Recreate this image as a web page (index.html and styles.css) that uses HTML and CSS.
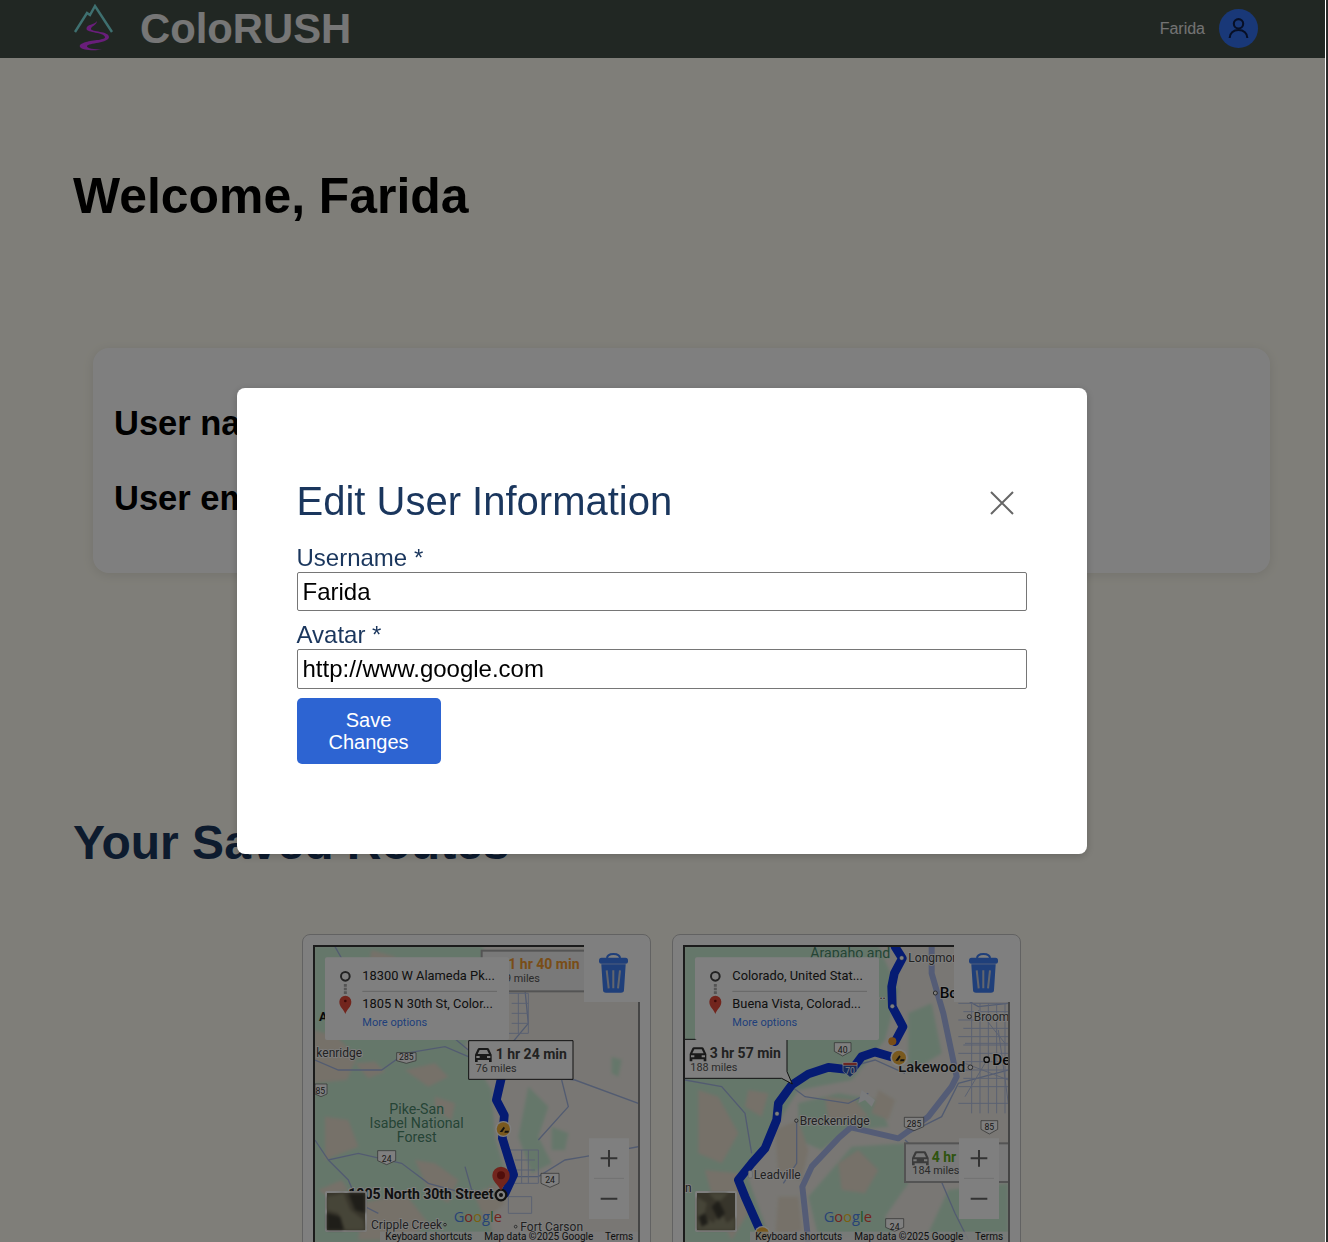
FILE: index.html
```html
<!DOCTYPE html>
<html lang="en">
<head>
<meta charset="utf-8">
<title>ColoRUSH</title>
<link rel="stylesheet" href="styles.css">
</head>
<body>
<div class="page">
  <header class="topbar">
    <div class="brand">
      <svg class="brand-logo" viewBox="0 0 42 48" width="42" height="48" aria-hidden="true">
        <polyline class="logo-peak" points="2,28 14,9 17,11 22,2 39,28"/>
        <path class="logo-river" d="M24 17C22 21 13 20 13.500 25C14 29 31 28 32 33C33 36 20 36 13 38C8 39.500 6 41 7 43C9 46.500 22 47 29 45.500C22 45.500 13 44.500 14 42C15 39 36 39 36 33C36 27 18 28 18 25C18 22 24 21 24 17Z"/>
      </svg>
      <span class="brand-name">ColoRUSH</span>
    </div>
    <div class="user">
      <span class="user-name">Farida</span>
      <span class="user-avatar">
        <svg viewBox="0 0 24 24" width="25" height="25" aria-hidden="true"><circle cx="12" cy="7.500" r="4.500"/><path d="M3.500 21c0-4.500 3.500-7.500 8.500-7.500s8.500 3 8.500 7.500"/></svg>
      </span>
    </div>
  </header>

  <main class="content">
    <h1 class="welcome">Welcome, Farida</h1>
    <section class="profile">
      <p class="profile-line">User name: Farida</p>
      <p class="profile-line">User email: farida@example.com</p>
    </section>
    <h2 class="routes-title">Your Saved Routes</h2>
    <section class="routes">

      <article class="route-card">
        <div class="map-frame">
          <svg class="map" viewBox="60 51 969 885" aria-label="Map">
            <rect class="land" x="0" y="0" width="1100" height="940"/>
            <g class="terrain">
              <path class="green" d="M56 47H560L600 130 520 330 510 350 590 480 600 620 640 760 560 780 600 940H56Z"/>
              <path class="green" d="M700 470l60 60-30 90 40 80-60 30-40-110Z"/>
              <path class="green" d="M770 590l50 20-10 50-40 0Z"/>
              <path class="green" d="M950 380l30 10-10 50-20-10Z"/>
              <path class="tan" d="M56 300l70 20 60 60-30 70-100 10Z"/>
              <path class="tan" d="M180 400l60-5 30 30-50 20Z"/>
              <path class="tan" d="M330 420l90-20 40 40-60 30Z"/>
              <path class="tan" d="M90 560l70 10 30 80-100 40Z"/>
              <path class="tan" d="M360 690l60 10 70 50-30 70-60-40Z"/>
              <path class="tan" d="M200 820l130-30 70 90-60 50H190Z"/>
              <path class="tan" d="M540 800l60-40 30 60-60 50Z"/>
              <path class="tan" d="M230 60l70 20-10 50-70-20Z"/>
              <path class="tan" d="M420 500l60 20-10 50-50-30Z"/>
              <path class="tan" d="M70 780l70-30 20 30-60 20Z"/>
            </g>
            <path class="road" d="M120 50l40 70 70 80 110 60 120 50 60 50"/>
            <path class="road" d="M60 390l70 30 130 0 70-50 120-20 70 30"/>
            <path class="road" d="M690 180l10 100-50 60-30 90"/>
            <path class="road" d="M60 630l40 60 90-20 130 30 80 60 110 30"/>
            <path class="road" d="M100 690l60 60 30 70 60 30"/>
            <path class="road" d="M640 740l90 0 80-50 60-10 160-30"/>
            <path class="road" d="M760 440l80 10 190 70"/>
            <path class="road" d="M800 450l20 80-90 100"/>
            <path class="road" d="M510 710l20 70 60 20"/>
            <path class="road-thin" d="M640 660h90v100h-90ZM660 690h60M660 720h60M680 660v100M700 660v100M640 800h70v50h-70ZM640 190h60v120h-60ZM650 220h50M650 250h50M650 280h50M670 190v120"/>
            <path class="route-line" d="M620 440L604 510 628 556 622 625 656 734 630 790"/>
            <g class="shield"><path d="M305 368h58v24l-29 8-29-8Z"/><text x="334" y="390">285</text></g>
            <g class="shield"><path d="M60 462h36v30l-18 8-18-8Z"/><text x="76" y="492">85</text></g>
            <g class="shield"><path d="M248 662h54v30l-27 12-27-12Z"/><text x="275" y="695">24</text></g>
            <g class="shield"><path d="M738 730h54v30l-27 12-27-12Z"/><text x="765" y="760">24</text></g>
            <text class="m-forest" text-anchor="middle"><tspan x="365" y="551">Pike-San</tspan><tspan x="365" y="593">Isabel National</tspan><tspan x="365" y="635">Forest</tspan></text>
            <text class="m-city" x="64" y="380">kenridge</text>
            <text class="m-city" x="228" y="896">Cripple Creek</text>
            <text class="m-city" x="676" y="902">Fort Carson</text>
            <circle class="m-dot" cx="450" cy="884" r="4"/>
            <circle class="m-dot" cx="662" cy="890" r="4"/>
            <text class="m-city-bold" x="72" y="273">A</text>
            <rect class="m-box" x="560" y="62" width="310" height="122"/>
            <text class="m-time-orange" x="640" y="118">1 hr 40 min</text>
            <text class="m-miles" x="612" y="157">89 miles</text>
            <g class="m-label-box">
              <path d="M521 332H834V448H521Z"/>
            </g>
            <g transform="translate(540 354)"><use href="#car"/></g>
            <text class="m-time" x="602" y="386">1 hr 24 min</text>
            <text class="m-miles" x="542" y="425">76 miles</text>
            <circle class="incident-ring" cx="625" cy="597" r="24"/>
            <circle class="incident" cx="625" cy="597" r="20"/>
            <path class="incident-mark" d="M614 606l12-16 4 4-8 12ZM630 602h12l-2 6h-12Z"/>
            <text class="m-place" x="160" y="806">1805 North 30th Street</text>
            <circle class="target-o" cx="618" cy="795" r="16"/>
            <circle class="target-i" cx="618" cy="795" r="6"/>
            <path class="pin-big" d="M618 782C607 760 592 756 592 736A26 26 0 0 1 644 736C644 756 629 760 618 782Z"/>
            <circle class="pin-big-dot" cx="618" cy="736" r="12"/>
            <text class="m-google" x="476" y="876"><tspan class="g-b">G</tspan><tspan class="g-r">o</tspan><tspan class="g-y">o</tspan><tspan class="g-b">g</tspan><tspan class="g-g">l</tspan><tspan class="g-r">e</tspan></text>
            <g>
              <rect class="thumb-frame" x="90" y="783" width="126" height="123" rx="6"/>
              <rect class="thumb" x="96" y="789" width="114" height="111"/>
              <g class="thumb-detail">
                <path class="thumb-light" d="M96 800l50-10 20 50 40 30 4 30h-60l-20-50-34-10Z"/>
                <path class="thumb-dark" d="M160 790l50 0 0 60-30-10ZM96 850l40 10 10 40H96Z"/>
              </g>
            </g>
            <rect class="attrib" x="255" y="905" width="780" height="32"/>
            <text class="m-attrib" x="271" y="929">Keyboard shortcuts</text>
            <text class="m-attrib" x="568" y="929">Map data ©2025 Google</text>
            <text class="m-attrib" x="930" y="929">Terms</text>
            <g>
              <rect class="zoom-box" x="882" y="625" width="120" height="242"/>
              <path class="zoom-sep" d="M897 745h90"/>
              <path class="zoom-mark" d="M917 685h50M942 660v50M917 806h50"/>
            </g>
            <g>
              <rect class="panel" x="90" y="82" width="552" height="248" rx="6"/>
              <circle class="panel-o" cx="151" cy="139" r="13"/>
              <path class="panel-dots" d="M151 162v30"/>
              <path class="pin" d="M151 252C146 236 133 232 133 215A18 18 0 0 1 169 215C169 232 156 236 151 252Z"/>
              <circle class="pin-dot" cx="151" cy="213" r="4"/>
              <text class="panel-text" x="202" y="149">18300 W Alameda Pk...</text>
              <path class="panel-div" d="M202 184H606"/>
              <text class="panel-text" x="202" y="233">1805 N 30th St, Color...</text>
              <text class="panel-link" x="202" y="287">More options</text>
            </g>
          </svg>
        </div>
        <button class="trash" type="button" aria-label="Delete route">
          <svg viewBox="0 0 30 40" width="30" height="40" aria-hidden="true"><use href="#trash"/></svg>
        </button>
      </article>

      <article class="route-card">
        <div class="map-frame">
          <svg class="map" viewBox="60 51 969 885" aria-label="Map">
            <rect class="land" x="0" y="0" width="1100" height="940"/>
            <g class="terrain">
              <path class="green" d="M56 47H640L700 180 660 330 560 450 400 480 300 640 240 720 320 940H56Z"/>
              <path class="green" d="M400 520l120-30 120 20 30 80-120 10-80 60-70-30Z"/>
              <path class="green" d="M560 650l160-10 10 120-70 100 30 60H460l-30-120Z"/>
              <path class="green" d="M730 250l70-30 30 150-100 60Z"/>
              <path class="green" d="M850 780l180-20v170H780Z"/>
              <path class="tan" d="M100 480l60 20 60 110-50 90-70-30Z"/>
              <path class="tan" d="M120 720l100 10 40 100-60 100-50-100Z"/>
              <path class="tan" d="M330 600l70-30 30 90-20 90-70-20Z"/>
              <path class="tan" d="M340 800l60 0 10 100-80 30Z"/>
              <path class="tan" d="M480 500l90 10 40 50-120 10Z"/>
              <path class="tan" d="M520 700l60-40 60 60-40 70-70-10Z"/>
              <path class="tan" d="M250 100l90 40-20 60-100-20Z"/>
              <path class="tan" d="M640 480l50 30-20 60-50-20Z"/>
              <path class="tan" d="M250 480l60 10-20 70-50-30Z"/>
            </g>
            <path class="road" d="M60 450l110 20 70 80 20 120"/>
            <path class="road" d="M380 470l40 30 130 20 60-30"/>
            <path class="road" d="M395 570l0 130-40 60"/>
            <path class="road" d="M710 620l120-60 50-100 150-40"/>
            <path class="road" d="M720 630l90 80 60 140 40 80"/>
            <path class="road-wide" d="M430 935L412 770 440 710 520 625 558 592 700 625 790 560 860 470 875 440 835 250 800 130 800 47"/>
            <path class="road" d="M520 420l110-30 90 40"/>
            <path class="road" d="M810 190h60l70 40 90-10"/>
            <path class="road-thin" d="M880 220H1034M880 270H1034M880 320H1034M880 370H1034M880 420H1034M880 470H1034M880 520H1034M920 220v330M970 220v330M1020 220v330M900 340h130M900 400l130 50M1000 300l30 220M940 240l80 100M900 500l60-100M895 245H1034M895 295H1034M895 345H1034M895 395H1034M895 445H1034M945 220v330M995 220v330"/>
            <path class="water" d="M590 480l40 30-10 20-20-20-20 10Z"/>
            <path class="route-line" d="M690 50L712 85 688 130 680 170 682 230 714 290 690 335"/>
            <path class="route-line" d="M695 385L630 366 590 380 560 420 490 412 430 432 380 465 340 520 335 570 300 655 260 700 220 750 240 800 282 895"/>
            <circle class="route-node" cx="710" cy="84" r="6"/>
            <circle class="route-node" cx="682" cy="229" r="6"/>
            <circle class="route-node" cx="336" cy="551" r="6"/>
            <rect class="route-node" x="250" y="722" width="12" height="22" rx="4"/>
            <circle class="incident-alt" cx="682" cy="334" r="12"/>
            <g class="shield"><path d="M508 338h50v26l-25 14-25-14Z"/><text x="533" y="368">40</text></g>
            <g class="shield-i"><path d="M534 398h42v26l-21 18-21-18Z"/><path class="shield-i-top" d="M534 398h42v8h-42Z"/><text x="555" y="431">70</text></g>
            <g class="shield"><path d="M718 562h58v28l-29 12-29-12Z"/><text x="747" y="592">285</text></g>
            <g class="shield"><path d="M948 572h50v26l-25 14-25-14Z"/><text x="973" y="600">85</text></g>
            <g class="shield"><path d="M662 866h54v26l-27 12-27-12Z"/><text x="689" y="899">24</text></g>
            <text class="m-forest" x="436" y="84">Arapaho and</text>
            <text class="m-city" x="730" y="96">Longmont</text>
            <text class="m-city-lg" x="824" y="203">Boulder</text>
            <circle class="m-dot" cx="811" cy="189" r="6"/>
            <text class="m-city" x="926" y="272">Broomfield</text>
            <circle class="m-dot" cx="913" cy="260" r="6"/>
            <text class="m-city-lg" x="982" y="404">Denver</text>
            <circle class="m-dot-bold" cx="965" cy="389" r="8"/>
            <text class="m-city-md" x="700" y="426">Lakewood</text>
            <circle class="m-dot" cx="916" cy="412" r="7"/>
            <text class="m-city" x="404" y="584">Breckenridge</text>
            <circle class="m-dot" cx="394" cy="572" r="5"/>
            <text class="m-city" x="266" y="746">Leadville</text>
            <text class="m-city" x="60" y="787">n</text>
            <text class="m-city" x="625" y="206">l...</text>
            <g class="m-label-box">
              <path d="M40 328H366V425L382 462 350 445H40Z"/>
            </g>
            <g transform="translate(74 352)"><use href="#car"/></g>
            <text class="m-time" x="134" y="384">3 hr 57 min</text>
            <text class="m-miles" x="76" y="423">188 miles</text>
            <rect class="m-box" x="720" y="640" width="330" height="116"/>
            <g transform="translate(741 664)"><use href="#car-grey"/></g>
            <text class="m-time-green" x="800" y="695">4 hr 4 min</text>
            <text class="m-miles" x="742" y="733">184 miles</text>
            <circle class="incident-ring" cx="702" cy="383" r="26"/>
            <circle class="incident" cx="702" cy="383" r="21"/>
            <path class="incident-mark" d="M691 392l12-16 4 4-8 12ZM707 388h12l-2 6h-12Z"/>
            <circle class="incident-ring" cx="292" cy="912" r="24"/>
            <circle class="incident" cx="292" cy="912" r="20"/>
            <text class="m-google" x="476" y="876"><tspan class="g-b">G</tspan><tspan class="g-r">o</tspan><tspan class="g-y">o</tspan><tspan class="g-b">g</tspan><tspan class="g-g">l</tspan><tspan class="g-r">e</tspan></text>
            <g>
              <rect class="thumb-frame" x="90" y="783" width="126" height="123" rx="6"/>
              <rect class="thumb" x="96" y="789" width="114" height="111"/>
              <g class="thumb-detail">
                <path class="thumb-light" d="M96 800l30 20-10 40 30 20 20-40 20 40 24-20v40h-114ZM130 789l30 30 30-30Z"/>
                <path class="thumb-dark" d="M140 830l20-20 20 40-20 20ZM100 860l20-10 10 30-20 10Z"/>
              </g>
            </g>
            <rect class="attrib" x="255" y="905" width="780" height="32"/>
            <text class="m-attrib" x="271" y="929">Keyboard shortcuts</text>
            <text class="m-attrib" x="568" y="929">Map data ©2025 Google</text>
            <text class="m-attrib" x="930" y="929">Terms</text>
            <g>
              <rect class="zoom-box" x="882" y="625" width="120" height="242"/>
              <path class="zoom-sep" d="M897 745h90"/>
              <path class="zoom-mark" d="M917 685h50M942 660v50M917 806h50"/>
            </g>
            <g>
              <rect class="panel" x="90" y="82" width="552" height="248" rx="6"/>
              <circle class="panel-o" cx="151" cy="139" r="13"/>
              <path class="panel-dots" d="M151 162v30"/>
              <path class="pin" d="M151 252C146 236 133 232 133 215A18 18 0 0 1 169 215C169 232 156 236 151 252Z"/>
              <circle class="pin-dot" cx="151" cy="213" r="4"/>
              <text class="panel-text" x="202" y="149">Colorado, United Stat...</text>
              <path class="panel-div" d="M202 184H606"/>
              <text class="panel-text" x="202" y="233">Buena Vista, Colorad...</text>
              <text class="panel-link" x="202" y="287">More options</text>
            </g>
          </svg>
        </div>
        <button class="trash" type="button" aria-label="Delete route">
          <svg viewBox="0 0 30 40" width="30" height="40" aria-hidden="true"><use href="#trash"/></svg>
        </button>
      </article>

    </section>
  </main>
</div>

<svg class="defs" aria-hidden="true">
  <defs>
    <g id="car">
      <path class="car-body" d="M0 42V20L8 3Q9 0 13 0H37Q41 0 42 3L50 20V42H42V36H8V42ZM8 18H42L36 6H14ZM4 24V30H14V24ZM36 24V30H46V24Z"/>
    </g>
    <g id="car-grey">
      <path class="car-body-grey" d="M0 42V20L8 3Q9 0 13 0H37Q41 0 42 3L50 20V42H42V36H8V42ZM8 18H42L36 6H14ZM4 24V30H14V24ZM36 24V30H46V24Z"/>
    </g>
    <g id="trash">
      <path class="trash-handle" d="M8 5.500Q8 1 14.500 1T21 5.500"/>
      <rect class="trash-fill" x="0" y="4.700" width="29" height="6" rx="2.500"/>
      <path class="trash-fill" d="M2.300 11.300H26.700L25 37Q25 39.700 22 39.700H7Q4 39.700 4 37Z"/>
      <path class="trash-slit" d="M7.700 17.300L9.700 35.300M14.300 17.300V35.300M21 17.300L19 35.300"/>
    </g>
  </defs>
</svg>

<div class="overlay">
  <div class="modal" role="dialog" aria-labelledby="edit-title">
    <div class="modal-head">
      <h2 class="modal-title" id="edit-title">Edit User Information</h2>
      <button class="modal-close" type="button" aria-label="Close">
        <svg viewBox="0 0 24 24" width="24" height="24" aria-hidden="true"><path d="M1 1L23 23M23 1L1 23"/></svg>
      </button>
    </div>
    <form class="modal-form">
      <label class="field-label" for="username">Username *</label>
      <input class="field-input" id="username" type="text" value="Farida">
      <label class="field-label" for="avatar">Avatar *</label>
      <input class="field-input field-input-tall" id="avatar" type="text" value="http://www.google.com">
      <button class="save" type="button">Save Changes</button>
    </form>
  </div>
</div>
<div class="window-edge"></div>
</body>
</html>
```

FILE: styles.css
```css
* { box-sizing: border-box; }
html, body { margin: 0; height: 1242px; overflow: hidden; }
body { font-family: "Liberation Sans", Arial, sans-serif; background: #fffdf2; color: #000; }
.page { width: 1325px; }

/* top bar */
.topbar { height: 58px; background: #434f47; display: flex; align-items: center; justify-content: space-between; padding: 0 67px 0 73px; }
.brand { display: flex; align-items: center; gap: 25px; }
.brand-logo { display: block; margin-top: -3px; }
.logo-peak { fill: none; stroke: #7de0e0; stroke-width: 2.400; }
.logo-river { fill: #d23cf5; }
.brand-name { font-size: 41.800px; font-weight: 700; color: #ececec; line-height: 48px; }
.user { display: flex; align-items: center; gap: 14px; margin-top: -2px; }
.user-name { font-size: 16px; color: #e6e6e6; margin-top: 2px; }
.user-avatar { width: 39px; height: 39px; border-radius: 50%; background: #3271f0; display: flex; align-items: center; justify-content: center; }
.user-avatar svg { fill: none; stroke: #0f1f4d; stroke-width: 2; }

/* page content */
.content { padding: 0 0 0 73px; }
.welcome { margin: 110px 0 0; font-size: 49.900px; line-height: 57px; font-weight: 700; }
.profile { margin: 123px 0 0 20px; width: 1177px; height: 225px; padding: 56px 21px 0; background: #fff; border-radius: 16px; box-shadow: 0 2px 12px rgba(0,0,0,.1); }
.profile-line { margin: 0 0 37px; font-size: 34.500px; line-height: 38px; font-weight: 700; white-space: nowrap; }
.routes-title { margin: 241px 0 0; font-size: 48px; line-height: 57px; font-weight: 700; color: #1a365d; }
.routes { display: flex; gap: 21px; margin: 63px 0 0 229px; }

/* route cards */
.route-card { position: relative; width: 349px; height: 340px; padding: 10px; background: #fff; border: 1px solid #c4c4c4; border-radius: 8px; }
.map-frame { width: 327px; height: 330px; border: 2px inset #8a8a8a; overflow: hidden; }
.map { display: block; width: 323px; height: 295px; font-family: Roboto, "Liberation Sans", sans-serif; }
.trash { position: absolute; top: 10px; right: 10px; width: 56px; height: 57px; padding: 8px 0 0 15px; border: 0; background: #fff; display: flex; justify-content: flex-start; align-items: flex-start; }
.trash-fill { fill: #3f7ef5; }
.trash-handle { fill: none; stroke: #3f7ef5; stroke-width: 2; }
.trash-slit { fill: none; stroke: #c4cbda; stroke-width: 2; }
.defs { position: absolute; width: 0; height: 0; }

/* map pieces */
.land { fill: #f2efe8; }
.terrain { filter: blur(5px); }
.green { fill: #cbeed5; }
.tan { fill: #ece2d2; }
.water { fill: #f4f6f8; }
.road { fill: none; stroke: #a5b7e2; stroke-width: 4; }
.road-thin { fill: none; stroke: #b5c2e4; stroke-width: 3; }
.road-wide { fill: none; stroke: #a9b9ec; stroke-width: 18; stroke-linejoin: round; }
.route-line { fill: none; stroke: #0a36e6; stroke-width: 26; stroke-linejoin: round; stroke-linecap: round; }
.route-node { fill: #fff; stroke: #9aa; stroke-width: 1; }
.shield path { fill: #fff; stroke: #555; stroke-width: 2; stroke-linejoin: round; }
.shield text { font-size: 26px; text-anchor: middle; fill: #333; }
.shield-i path { fill: #2c56b8; stroke: #fff; stroke-width: 2; }
.shield-i .shield-i-top { fill: #d23b30; }
.shield-i text { font-size: 26px; text-anchor: middle; fill: #fff; }
.m-forest { font-size: 42.500px; fill: #4a8a6a; paint-order: stroke; stroke: #d5efe0; stroke-width: 3px; }
.m-city { font-size: 36px; fill: #444; paint-order: stroke; stroke: #fff; stroke-width: 5px; }
.m-city-md { font-size: 44px; font-weight: 500; fill: #222; paint-order: stroke; stroke: #fff; stroke-width: 5px; }
.m-city-lg { font-size: 46px; font-weight: 500; fill: #111; paint-order: stroke; stroke: #fff; stroke-width: 5px; }
.m-city-bold { font-size: 38px; font-weight: 700; fill: #111; }
.m-dot { fill: #fff; stroke: #555; stroke-width: 3; }
.m-dot-bold { fill: #fff; stroke: #111; stroke-width: 4; }
.m-box { fill: #f2f2f2; stroke: #a8a8a8; stroke-width: 6; }
.m-label-box path { fill: #fff; stroke: #222; stroke-width: 3; }
.m-time { font-size: 42px; font-weight: 700; fill: #444; }
.m-time-orange { font-size: 42px; font-weight: 700; fill: #f29a2e; }
.m-time-green { font-size: 42px; font-weight: 700; fill: #5ea81e; }
.m-miles { font-size: 32.500px; fill: #555; }
.car-body { fill: #333; }
.car-body-grey { fill: #777; }
.m-place { font-size: 42px; font-weight: 700; fill: #222; paint-order: stroke; stroke: #fff; stroke-width: 6px; }
.incident-ring { fill: #fff; }
.incident-alt { fill: #f09a2e; }
.incident { fill: #f2b33c; }
.incident-mark { fill: #222; }
.target-o { fill: #fff; stroke: #222; stroke-width: 7; }
.target-i { fill: #222; }
.pin-big { fill: #e44a3a; }
.pin-big-dot { fill: #a01c16; }
.m-google { font-family: "Open Sans", "Liberation Sans", sans-serif; font-size: 44px; }
.g-b { fill: #4f86ec; }
.g-r { fill: #e5483a; }
.g-y { fill: #f8bf20; }
.g-g { fill: #38a94f; }
.thumb-frame { fill: #fff; }
.thumb { fill: #6f6a56; }
.thumb-detail { filter: blur(4px); }
.thumb-light { fill: #8d8a70; }
.thumb-dark { fill: #3f3d33; }
.attrib { fill: #f6f6f6; fill-opacity: .8; }
.m-attrib { font-size: 30px; fill: #222; }
.zoom-box { fill: #fff; }
.zoom-sep { stroke: #e2e2e2; stroke-width: 3; }
.zoom-mark { stroke: #666; stroke-width: 6; fill: none; }
.panel { fill: #fff; }
.panel-o { fill: #fff; stroke: #444; stroke-width: 6; }
.panel-dots { stroke: #aaa; stroke-width: 9; stroke-dasharray: 8 3; }
.pin { fill: #e44a3a; }
.pin-dot { fill: #7a1410; }
.panel-text { font-size: 38.500px; fill: #222; }
.panel-div { stroke: #ccc; stroke-width: 3; }
.panel-link { font-size: 33px; fill: #3f7ef5; }

/* dialog */
.overlay { position: fixed; top: 0; bottom: 0; left: 0; width: 1325px; padding-right: 2px; background: rgba(0,0,0,.5); display: flex; align-items: center; justify-content: center; }
.modal { width: 850px; height: 466px; padding: 90px 60px; background: #fff; border-radius: 8px; box-shadow: 0 2px 8px rgba(0,0,0,.2); }
.modal-head { display: flex; align-items: center; justify-content: space-between; margin-bottom: 19px; padding-right: 13px; }
.modal-title { margin: 0; font-size: 40px; line-height: 47px; font-weight: 400; color: #1a365d; }
.modal-close { padding: 0; border: 0; background: none; display: block; margin-top: 3px; height: 24px; }
.modal-close svg { display: block; fill: none; stroke: #666; stroke-width: 2; }
.modal-form { display: flex; flex-direction: column; align-items: flex-start; }
.field-label { font-size: 24px; line-height: 28px; color: #1a365d; }
.field-input { width: 730px; height: 39px; margin-bottom: 10px; padding: 1px 5px; font: 24px "Liberation Sans", Arial, sans-serif; color: #000; background: #fff; border: 1px solid #767676; border-radius: 2px; }
.field-input-tall { height: 40px; margin-bottom: 9px; }
.save { width: 144px; height: 66px; padding: 10px 20px; font: 20px/22.500px "Liberation Sans", Arial, sans-serif; color: #fff; background: #2d64d2; border: 0; border-radius: 5px; text-align: center; }

/* the window's own edge */
.window-edge { position: fixed; top: 0; bottom: 0; right: 0; width: 3px; background: #2b2b2b; border-left: 1px solid #fff; }
```
